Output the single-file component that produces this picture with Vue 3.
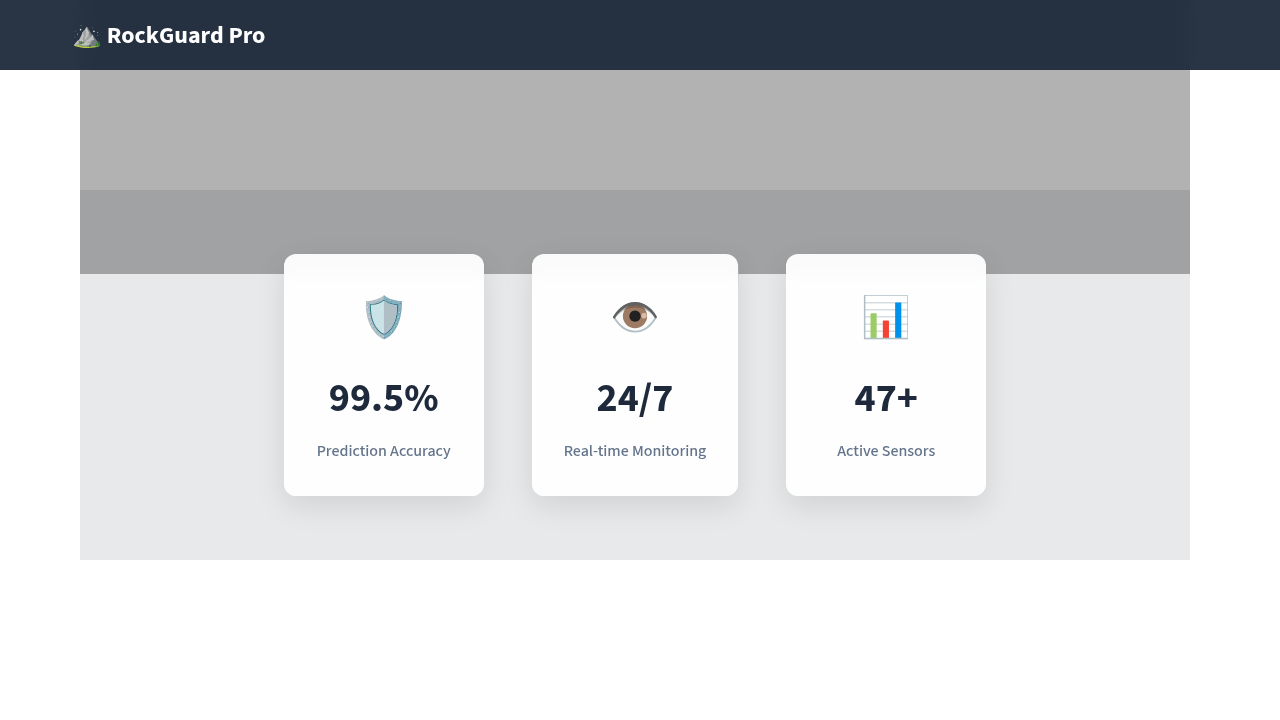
<script setup>
const stats = [
  { icon: '🛡️', value: '99.5%', label: 'Prediction Accuracy' },
  { icon: '👁️', value: '24/7', label: 'Real-time Monitoring' },
  { icon: '📊', value: '47+', label: 'Active Sensors' },
]
</script>

<template>
  <div class="page">
    <header class="navbar">
      <div class="brand">⛰️ RockGuard Pro</div>
    </header>
    <main class="content">
      <div class="hero"></div>
      <section class="stats">
        <article v-for="stat in stats" :key="stat.label" class="card">
          <div class="icon">{{ stat.icon }}</div>
          <div class="value">{{ stat.value }}</div>
          <div class="label">{{ stat.label }}</div>
        </article>
      </section>
    </main>
  </div>
</template>

<style>
body {
  background: #fff;
}
</style>

<style scoped>
.page {
  font-family: "Source Sans 3", "Noto Sans CJK SC", sans-serif;
  line-height: 1.6;
  color: #1e293b;
}
.navbar {
  position: sticky;
  top: 0;
  z-index: 10;
  padding: 17px 72px 15px;
  background: rgba(30, 41, 59, 0.95);
  backdrop-filter: blur(10px);
}
.brand {
  font-size: 24px;
  font-weight: 700;
  color: #fff;
}
.content {
  margin-top: -70px;
  margin-right: 10px;
  padding: 0 80px;
}
.hero {
  position: relative;
  height: 274px;
  background: rgba(0, 0, 0, 0.3);
}
.stats {
  display: flex;
  justify-content: center;
  gap: 48px;
  margin-top: -84px;
  padding: 64px 32px;
  background: #e7e9eb;
}
.card {
  position: relative;
  z-index: 1;
  box-sizing: border-box;
  min-width: 200px;
  padding: 33px 32px 31px;
  border-radius: 12px;
  background: rgba(255, 255, 255, 0.95);
  backdrop-filter: blur(10px);
  box-shadow: 0 10px 30px rgba(0, 0, 0, 0.1);
  text-align: center;
}
.icon {
  margin-bottom: 16px;
  font-size: 40px;
}
.value {
  margin-bottom: 8px;
  font-size: 40px;
  font-weight: 700;
}
.label {
  font-size: 16px;
  font-weight: 500;
  color: #64748b;
}
</style>
